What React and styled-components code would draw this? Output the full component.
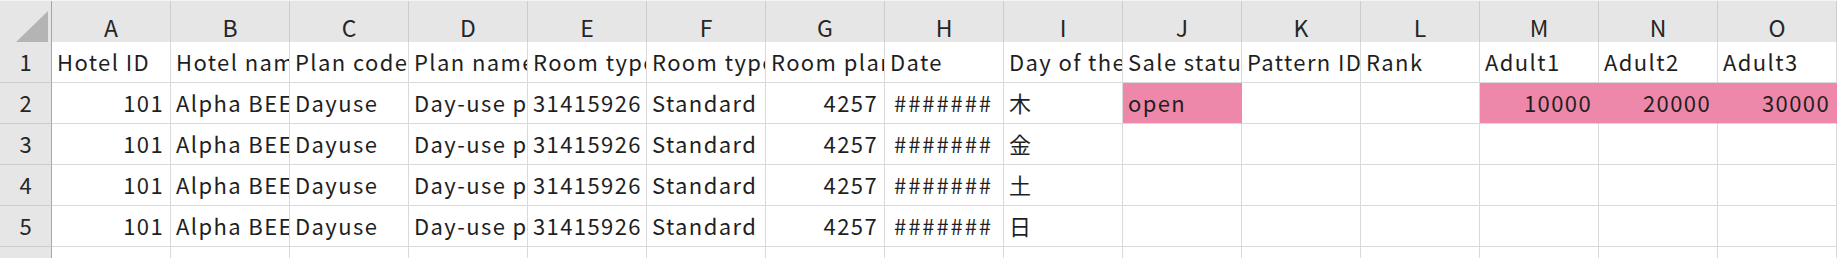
import React from 'react';
import styled, { createGlobalStyle } from 'styled-components';

const GlobalStyle = createGlobalStyle`
  html, body {
    margin: 0;
    padding: 0;
    background: #ffffff;
    overflow: hidden;
  }
`;

const PINK = '#ee88aa';

const Sheet = styled.div`
  display: grid;
  grid-template-columns: 52px repeat(15, 119px);
  grid-auto-rows: 41px;
  width: 1837px;
  font-family: "Noto Sans CJK JP", "Noto Sans", sans-serif;
  font-size: 22px;
  font-weight: 400;
  color: #1f1f1f;
  border-top: 1px solid #f4f4f4;
`;

const Corner = styled.div`
  height: 47px;
  background: #e6e6e6;
  border-right: 1px solid #a6a6a6;
  border-bottom: 1px solid #a6a6a6;
  box-sizing: border-box;
  display: flex;
  align-items: flex-end;
  justify-content: flex-end;
  padding: 0 3px 4px 0;
`;

const ColHead = styled.div`
  height: 47px;
  background: #e6e6e6;
  border-right: 1px solid #cdcdcd;
  border-bottom: 1px solid #a6a6a6;
  box-sizing: border-box;
  display: flex;
  align-items: flex-end;
  justify-content: center;
  line-height: 22px;
  padding-bottom: 9px;
  color: #262626;
  font-size: 23px;
`;

const RowHead = styled.div`
  background: #e6e6e6;
  border-right: 1px solid #a6a6a6;
  border-bottom: 1px solid #cdcdcd;
  box-sizing: border-box;
  display: flex;
  align-items: flex-end;
  justify-content: center;
  line-height: 22px;
  padding-bottom: 10px;
  color: #262626;
`;

const Cell = styled.div`
  background: ${(p) => (p.$fill ? PINK : '#ffffff')};
  border-right: 1px solid ${(p) => (p.$fill ? PINK : '#dadada')};
  border-bottom: 1px solid #dadada;
  box-sizing: border-box;
  display: flex;
  align-items: flex-end;
  justify-content: ${(p) => (p.$align === 'right' ? 'flex-end' : p.$align === 'center' ? 'center' : 'flex-start')};
  padding: 0 6px 10px 5px;
  line-height: 22px;
  white-space: nowrap;
  overflow: hidden;
  letter-spacing: ${(p) => (p.$hash ? '1.9px' : '1.4px')};
`;

const CornerMark = () => (
  <svg width="33" height="32" viewBox="0 0 33 32">
    <polygon points="0,32 33,32 33,0" fill="#b4b4b4" />
  </svg>
);

const columns = ['A', 'B', 'C', 'D', 'E', 'F', 'G', 'H', 'I', 'J', 'K', 'L', 'M', 'N', 'O'];

const header = [
  'Hotel ID', 'Hotel name', 'Plan code', 'Plan name', 'Room type ID', 'Room type name',
  'Room plan ID', 'Date', 'Day of the week', 'Sale status', 'Pattern ID', 'Rank',
  'Adult1', 'Adult2', 'Adult3',
];

const days = ['木', '金', '土', '日'];

const dataRow = (i) => [
  { v: '101', align: 'right' },
  { v: 'Alpha BEE' },
  { v: 'Dayuse' },
  { v: 'Day-use plan' },
  { v: '31415926' },
  { v: 'Standard' },
  { v: '4257', align: 'right' },
  { v: '#######', align: 'center', hash: true },
  { v: days[i] },
  { v: i === 0 ? 'open' : '', fill: i === 0 },
  { v: '' },
  { v: '' },
  { v: i === 0 ? '10000' : '', align: 'right', fill: i === 0 },
  { v: i === 0 ? '20000' : '', align: 'right', fill: i === 0 },
  { v: i === 0 ? '30000' : '', align: 'right', fill: i === 0 },
];

export default function App() {
  return (
    <>
      <GlobalStyle />
      <Sheet>
        <Corner>
          <CornerMark />
        </Corner>
        {columns.map((c) => (
          <ColHead key={c}>{c}</ColHead>
        ))}

        <RowHead>1</RowHead>
        {header.map((h) => (
          <Cell key={h}>{h}</Cell>
        ))}

        {days.map((d, i) => (
          <React.Fragment key={d}>
            <RowHead>{i + 2}</RowHead>
            {dataRow(i).map((c, j) => (
              <Cell key={j} $align={c.align} $fill={c.fill} $hash={c.hash}>
                {c.v}
              </Cell>
            ))}
          </React.Fragment>
        ))}

        <RowHead>6</RowHead>
        {columns.map((c) => (
          <Cell key={c} />
        ))}
      </Sheet>
    </>
  );
}
